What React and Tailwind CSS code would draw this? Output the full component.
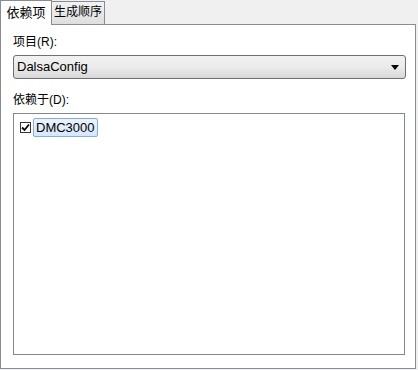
import React from 'react';

const font = { fontFamily: '"Liberation Sans", "Noto Sans CJK SC", sans-serif' };

const Tabs = () => (
  <div className="flex items-end h-[24px]">
    <div className="relative z-10 -mb-px h-[25px] w-[52px] bg-white border border-b-0 border-[#898c95] flex items-start justify-center pt-[4px] text-[13px] leading-[15px] whitespace-nowrap text-black">
      依赖项
    </div>
    <div className="h-[23px] w-[54px] -ml-px border border-b-0 border-[#898c95] bg-gradient-to-b from-[#f2f2f2] to-[#dedede] flex items-start justify-center pt-[3px] text-[12px] leading-[15px] whitespace-nowrap text-black">
      生成顺序
    </div>
  </div>
);

const Combo = () => (
  <div className="mt-[5px] h-[24px] w-[393px] rounded-[3px] border border-[#707070] bg-gradient-to-b from-[#f2f2f2] via-[#ebebeb] to-[#d8d8d8] flex items-center justify-between pl-[3px] pr-[6px]">
    <span className="text-[13px] text-black">DalsaConfig</span>
    <svg width="8" height="5" viewBox="0 0 8 5">
      <path d="M0 0 H8 L4 5 Z" fill="#000" />
    </svg>
  </div>
);

const DependList = () => (
  <div className="mt-[5px] h-[242px] w-[392px] border border-[#828790] bg-white pl-[6px] pt-[4px]">
    <div className="flex items-center gap-[2px]">
      <div className="h-[11px] w-[11px] border border-[#333] bg-white flex items-center justify-center">
        <svg width="9" height="9" viewBox="0 0 9 9">
          <path d="M1 4.5 L3.5 7 L8 1.5" stroke="#000" strokeWidth="1.8" fill="none" />
        </svg>
      </div>
      <div className="h-[19px] px-[2px] rounded-[2px] border border-[#84acdd] bg-gradient-to-b from-[#eaf3fd] to-[#d6e7fb] flex items-center text-[13px] text-black">
        DMC3000
      </div>
    </div>
  </div>
);

export default function App() {
  return (
    <div className="w-[418px] h-[370px] bg-[#f0f0f0] text-[12px]" style={font}>
      <Tabs />
      <div className="w-[416px] h-[345px] bg-white border border-[#898c95] pl-[12px] pt-[9px]">
        <div className="leading-[16px] text-[12px] text-black">项目(R):</div>
        <Combo />
        <div className="mt-[13px] leading-[16px] text-[12px] text-black">依赖于(D):</div>
        <DependList />
      </div>
    </div>
  );
}
